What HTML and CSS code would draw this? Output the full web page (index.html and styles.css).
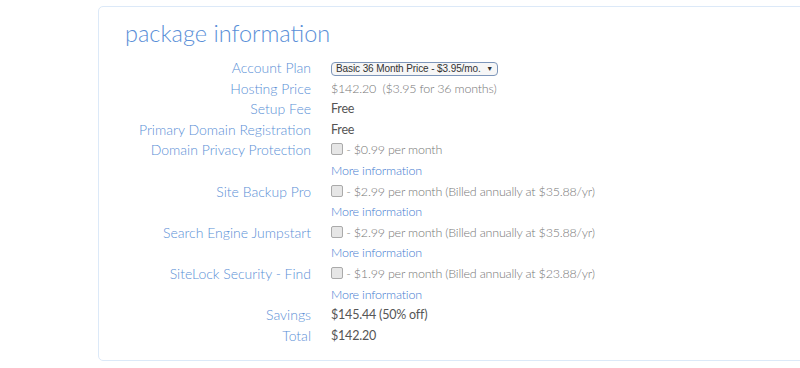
FILE: index.html
```
<!DOCTYPE html>
<html lang="en">
<head>
    <meta charset="UTF-8">
    <meta name="viewport" content="width=device-width, initial-scale=1.0">
    <title>Package Information</title>
    <link rel="stylesheet" href="styles.css">
</head>
<body>
    <div class="panel">
        <h2 class="title">package information</h2>
        <div class="info">
            <div class="label">Account Plan</div>
            <div class="value">
                <div class="select">Basic 36 Month Price - $3.95/mo. <span class="arrow">&#9660;</span></div>
            </div>

            <div class="label">Hosting Price</div>
            <div class="value light">$142.20 &nbsp;($3.95 for 36 months)</div>

            <div class="label">Setup Fee</div>
            <div class="value">Free</div>

            <div class="label">Primary Domain Registration</div>
            <div class="value">Free</div>

            <div class="label">Domain Privacy Protection</div>
            <div class="value light"><span class="check"></span> - $0.99 per month</div>
            <div class="label"></div>
            <div class="value"><a href="#">More information</a></div>

            <div class="label">Site Backup Pro</div>
            <div class="value light"><span class="check"></span> - $2.99 per month (Billed annually at $35.88/yr)</div>
            <div class="label"></div>
            <div class="value"><a href="#">More information</a></div>

            <div class="label">Search Engine Jumpstart</div>
            <div class="value light"><span class="check"></span> - $2.99 per month (Billed annually at $35.88/yr)</div>
            <div class="label"></div>
            <div class="value"><a href="#">More information</a></div>

            <div class="label">SiteLock Security - Find</div>
            <div class="value light"><span class="check"></span> - $1.99 per month (Billed annually at $23.88/yr)</div>
            <div class="label"></div>
            <div class="value"><a href="#">More information</a></div>

            <div class="label">Savings</div>
            <div class="value">$145.44 (50% off)</div>

            <div class="label">Total</div>
            <div class="value">$142.20</div>
        </div>
    </div>
</body>
</html>
```

FILE: styles.css
```
body {
    margin: 0;
    padding: 6px 0 0 98px;
    font-family: Lato, "Open Sans", sans-serif;
    background: #fff;
    overflow: hidden;
}
.panel {
    width: 740px;
    height: 355px;
    border: 1px solid #dce9f8;
    border-radius: 5px;
    box-sizing: border-box;
}
.title {
    margin: 9px 0 0 26px;
    font-size: 23.5px;
    font-weight: 300;
    color: #5a8fd8;
    line-height: 34px;
}
.info {
    display: grid;
    grid-template-columns: 212px 1fr;
    column-gap: 20px;
    margin-top: 8px;
    font-size: 14px;
    line-height: 20.6px;
}
.label {
    text-align: right;
    color: #5b90d6;
    font-weight: 300;
}
.value {
    color: #555;
    font-size: 12.5px;
    letter-spacing: -0.2px;
}
.value.light {
    color: #777;
    font-weight: 300;
}
.value a {
    color: #3f7bd0;
    text-decoration: none;
    font-weight: 300;
}
.select {
    display: inline-block;
    margin-top: 3px;
    font-family: "Liberation Sans", Arial, sans-serif;
    font-size: 10px;
    line-height: 12px;
    letter-spacing: -0.1px;
    color: #333;
    border: 1px solid #7d96ba;
    border-radius: 4px;
    padding: 0 4px;
    background: #f6f6f6;
}
.arrow {
    font-size: 7px;
    margin-left: 3px;
    vertical-align: 1px;
}
.check {
    display: inline-block;
    width: 10px;
    height: 10px;
    border: 1px solid #aaa;
    border-radius: 2px;
    background: #e6e6e6;
    vertical-align: -1px;
}
```
